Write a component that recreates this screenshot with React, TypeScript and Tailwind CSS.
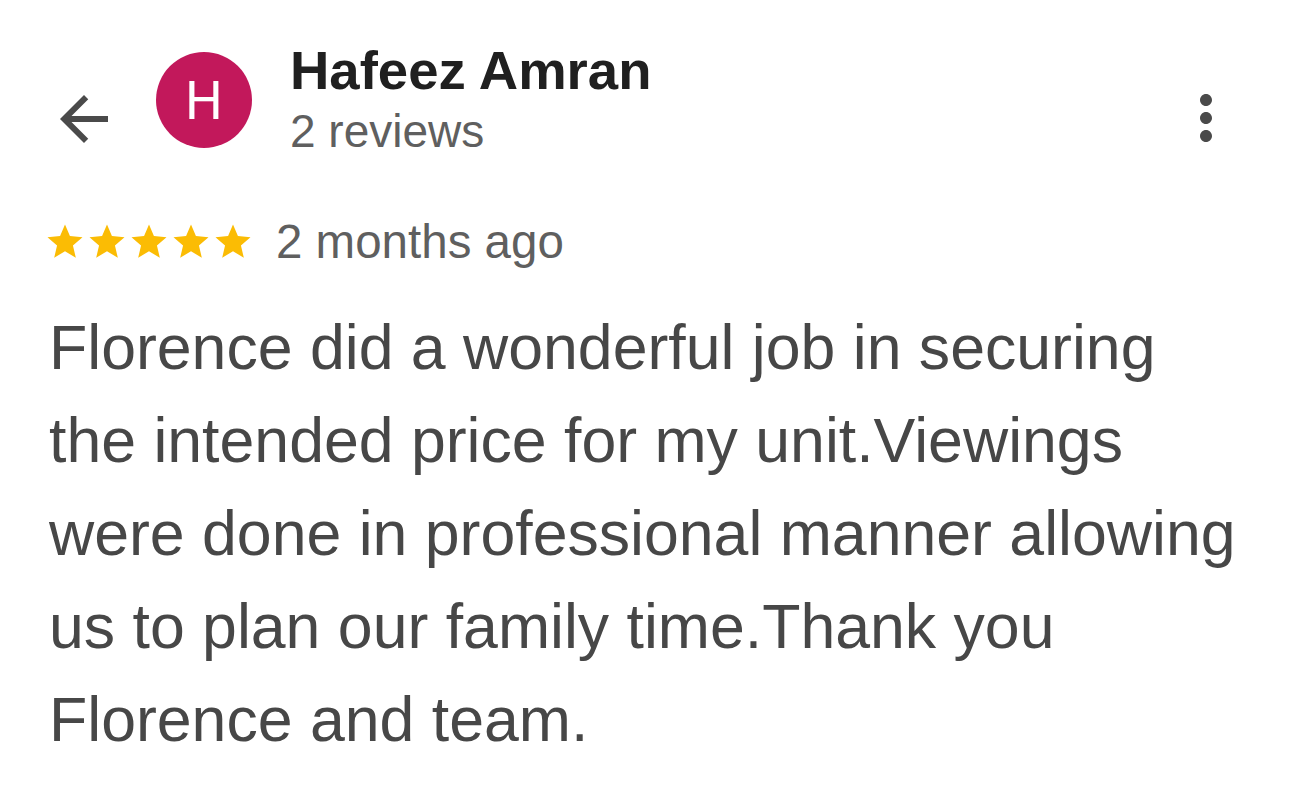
import React from "react";

const Star = () => (
  <svg width="42" height="42" viewBox="0 0 24 24" className="block shrink-0">
    <path
      fill="#fbbc04"
      d="M12 17.27L18.18 21l-1.64-7.03L22 9.24l-7.19-.61L12 2 9.19 8.63 2 9.24l5.46 4.73L5.82 21z"
    />
  </svg>
);

export default function App() {
  return (
    <div
      className="w-[1290px] h-[812px] bg-white overflow-hidden"
      style={{ fontFamily: '"Liberation Sans", Arial, sans-serif' }}
    >
      <div className="flex items-start pl-[48px] pr-[48px] pt-[40px]">
        <svg width="72" height="72" viewBox="0 0 24 24" className="block shrink-0 mt-[43px]">
          <path
            fill="#4a4a4a"
            d="M20 11H7.83l5.59-5.59L12 4l-8 8 8 8 1.41-1.41L7.83 13H20v-2z"
          />
        </svg>
        <div
          className="ml-[36px] mt-[12px] w-[96px] h-[96px] rounded-full bg-[#c2185b] flex items-center justify-center text-white text-[53px] leading-none shrink-0"
          style={{ fontFamily: 'Roboto, "Liberation Sans", sans-serif' }}
        >
          <span className="mt-[2px]">H</span>
        </div>
        <div className="ml-[38px] flex flex-col">
          <div className="mt-[1px] text-[54.5px] leading-[60px] font-bold text-[#202020]">
            Hafeez Amran
          </div>
          <div className="mt-[4px] text-[46px] leading-[52px] text-[#5f5f5f]">2 reviews</div>
        </div>
        <svg width="72" height="72" viewBox="0 0 24 24" className="block shrink-0 ml-auto mt-[42px]">
          <path
            fill="#4a4a4a"
            d="M12 8c1.1 0 2-.9 2-2s-.9-2-2-2-2 .9-2 2 .9 2 2 2zm0 2c-1.1 0-2 .9-2 2s.9 2 2 2 2-.9 2-2-.9-2-2-2zm0 6c-1.1 0-2 .9-2 2s.9 2 2 2 2-.9 2-2-.9-2-2-2z"
          />
        </svg>
      </div>

      <div className="flex items-center pl-[44px] mt-[64px] h-[42px]">
        <div className="flex">
          <Star />
          <Star />
          <Star />
          <Star />
          <Star />
        </div>
        <div className="ml-[22px] text-[47.5px] leading-[42px] text-[#5f5f5f] whitespace-nowrap">
          2 months ago
        </div>
      </div>

      <p className="mt-[38px] pl-[49px] w-[1250px] text-[62.6px] leading-[93px] text-[#474747]">
        Florence did a wonderful job in securing the intended price for my unit.Viewings were done in
        professional manner allowing us to plan our family time.Thank you Florence and team.
      </p>
    </div>
  );
}
